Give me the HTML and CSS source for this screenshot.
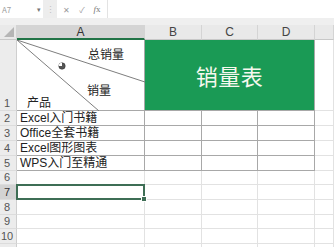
FILE: index.html
```html
<!DOCTYPE html>
<html>
<head>
<meta charset="utf-8">
<link rel="stylesheet" href="styles.css">
</head>
<body>
<div class="fbar">
  <div class="namebox"><span class="nb-text">A7</span><span class="nb-arrow">▾</span></div>
  <div class="fsep">⋮</div>
  <div class="ficons">
    <span class="ic">✕</span><span class="ic">✓</span><span class="ic fx"><i>f</i>x</span>
  </div>
  <div class="finput"></div>
</div>
<div class="band"></div>
<div class="sheet">
  <div class="corner"><span class="tri"></span></div>
  <div class="ch sel">A</div>
  <div class="ch">B</div>
  <div class="ch">C</div>
  <div class="ch">D</div>
  <div class="ch"></div>

  <div class="rh r1">1</div>
  <div class="c t a1">
    <svg class="diag" width="128" height="71" viewBox="0 0 128 71"><line x1="0" y1="0" x2="128" y2="42" stroke="#7e7e7e" stroke-width="1"/><line x1="0" y1="0" x2="82" y2="71" stroke="#7e7e7e" stroke-width="1"/></svg>
    <span class="lbl l-total">总销量</span>
    <span class="lbl l-sales">销量</span>
    <span class="lbl l-prod">产品</span>
    <svg class="cursor" width="8" height="8" viewBox="0 0 8 8"><circle cx="4" cy="4" r="3.2" fill="#555" stroke="#333" stroke-width="0.6"/><path d="M4 4 L4 0.8 A3.2 3.2 0 0 0 0.8 4 Z" fill="#fff"/></svg>
  </div>
  <div class="c t title">销量表</div>
  <div class="c"></div>

  <div class="rh">2</div><div class="c t txt">Excel入门书籍</div><div class="c t"></div><div class="c t"></div><div class="c t"></div><div class="c"></div>
  <div class="rh">3</div><div class="c t txt">Office全套书籍</div><div class="c t"></div><div class="c t"></div><div class="c t"></div><div class="c"></div>
  <div class="rh">4</div><div class="c t txt">Excel图形图表</div><div class="c t"></div><div class="c t"></div><div class="c t"></div><div class="c"></div>
  <div class="rh">5</div><div class="c t txt">WPS入门至精通</div><div class="c t"></div><div class="c t"></div><div class="c t"></div><div class="c"></div>
  <div class="rh">6</div><div class="c"></div><div class="c"></div><div class="c"></div><div class="c"></div><div class="c"></div>
  <div class="rh rsel">7</div><div class="c active"></div><div class="c"></div><div class="c"></div><div class="c"></div><div class="c"></div>
  <div class="rh">8</div><div class="c"></div><div class="c"></div><div class="c"></div><div class="c"></div><div class="c"></div>
  <div class="rh">9</div><div class="c"></div><div class="c"></div><div class="c"></div><div class="c"></div><div class="c"></div>
  <div class="rh">10</div><div class="c"></div><div class="c"></div><div class="c"></div><div class="c"></div><div class="c"></div>
  <div class="rh"></div><div class="c"></div><div class="c"></div><div class="c"></div><div class="c"></div><div class="c"></div>
</div>
</body>
</html>
```
FILE: styles.css
```css
html, body {
  margin: 0;
  padding: 0;
}
body {
  width: 334px;
  height: 247px;
  overflow: hidden;
  background: #ffffff;
  font-family: "Noto Sans CJK SC", "Liberation Sans", sans-serif;
  color: #222;
}
.fbar {
  display: flex;
  height: 18px;
  background: #ffffff;
}
.namebox {
  width: 43px;
  display: flex;
  justify-content: space-between;
  align-items: center;
  padding: 0 2px 0 2px;
  box-sizing: border-box;
  font-size: 8px;
  color: #a0a0a0;
}
.nb-arrow {
  font-size: 7px;
  color: #777;
}
.fsep {
  width: 14px;
  background: #ededed;
  display: flex;
  justify-content: center;
  align-items: center;
  font-size: 9px;
  color: #c0c0c0;
}
.ficons {
  width: 50px;
  display: flex;
  justify-content: space-around;
  align-items: center;
  padding: 0 2px;
  box-sizing: border-box;
  font-size: 8px;
  color: #9a9a9a;
}
.ic.fx {
  font-family: "Liberation Serif", serif;
  font-size: 9px;
  color: #777;
}
.finput {
  flex: 1;
  border-left: 1px solid #e3e3e3;
}
.band {
  height: 7px;
  background: #efefef;
}
.sheet {
  display: grid;
  grid-template-columns: 17px 128px 57px 56px 57px 19px;
  grid-template-rows: 15px 71px 15px 15px 15px 15px 14px 15px 15px 14px 15px 6px;
}
.sheet > div {
  box-sizing: border-box;
}
.corner {
  background: #e9e9e9;
  border-right: 1px solid #d4d4d4;
  border-bottom: 1px solid #c8c8c8;
  position: relative;
}
.tri {
  position: absolute;
  right: 2px;
  bottom: 2px;
  width: 0;
  height: 0;
  border-left: 10px solid transparent;
  border-bottom: 10px solid #b5b5b5;
}
.ch {
  background: #e9e9e9;
  border-right: 1px solid #d4d4d4;
  border-bottom: 1px solid #c8c8c8;
  display: flex;
  justify-content: center;
  align-items: center;
  font-family: "Liberation Sans", sans-serif;
  font-size: 12px;
  line-height: 12px;
  color: #444;
}
.ch.sel {
  background: #d4d4d4;
  border-bottom: 2px solid #217346;
  color: #333;
}
.rh {
  background: #ececec;
  border-right: 1px solid #cfcfcf;
  border-bottom: 1px solid #dcdcdc;
  display: flex;
  justify-content: center;
  align-items: flex-end;
  font-family: "Liberation Sans", sans-serif;
  font-size: 11px;
  line-height: 12px;
  padding-bottom: 1px;
  padding-right: 2px;
  color: #555;
}
.rh.rsel {
  background: #d3d3d3;
  color: #333;
}
.c {
  border-right: 1px solid #e2e2e2;
  border-bottom: 1px solid #e2e2e2;
}
.c.t {
  border-right: 1px solid #a8a8a8;
  border-bottom: 1px solid #a8a8a8;
}
.txt {
  display: flex;
  align-items: flex-end;
  padding-left: 3px;
  font-family: "Liberation Sans", "Noto Sans CJK SC", sans-serif;
  font-size: 12px;
  line-height: 13px;
  color: #222;
  white-space: nowrap;
}
.a1 {
  position: relative;
}
.diag {
  position: absolute;
  left: 0;
  top: 0;
}
.lbl {
  position: absolute;
  font-size: 12px;
  line-height: 13px;
  color: #222;
}
.l-total { left: 71px; top: 7px; }
.l-sales { left: 70px; top: 43px; }
.l-prod { left: 10px; top: 55px; }
.cursor {
  position: absolute;
  left: 41px;
  top: 22px;
}
.title {
  grid-column: 3 / span 3;
  background: #1a9a55;
  display: flex;
  justify-content: center;
  align-items: center;
  font-size: 22px;
  line-height: 24px;
  color: #f6f8ee;
  letter-spacing: 0.5px;
}
.active {
  position: relative;
}
.active::after {
  content: "";
  position: absolute;
  left: -1px;
  top: -1px;
  right: -1px;
  bottom: -1px;
  border: 2px solid #3e6e55;
}
.active::before {
  content: "";
  position: absolute;
  right: -3px;
  bottom: -3px;
  width: 4px;
  height: 4px;
  background: #3e6e55;
  border: 1px solid #fff;
  z-index: 2;
}
```
